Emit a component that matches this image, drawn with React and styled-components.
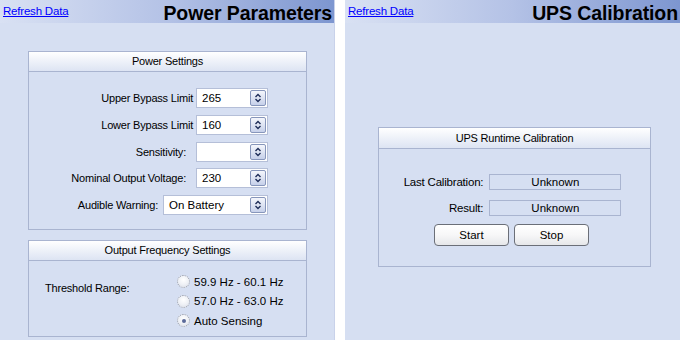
import * as React from "react"
import styled, { createGlobalStyle } from "styled-components"

const GlobalStyle = createGlobalStyle`
  body {
    margin: 0;
    background: #ffffff;
    font-family: "Liberation Sans", Arial, sans-serif;
    font-size: 11px;
    color: #000;
  }
`

const Page = styled.div`
  display: flex;
  gap: 10px;
  width: 680px;
  height: 340px;
  overflow: hidden;
`

const Panel = styled.div`
  width: 335px;
  height: 340px;
  background: #d6dff2;
  display: flex;
  flex-direction: column;
  border-right: ${p => (p.$edge ? "1px solid #c9d2ea" : "none")};
  box-sizing: border-box;
`

const Header = styled.div`
  height: 23px;
  flex-shrink: 0;
  display: flex;
  align-items: center;
  justify-content: space-between;
  padding: 0 2px 0 3px;
  background: linear-gradient(to right, #d9e1f3 0%, #b4c2e6 50%, #7d96d0 100%);
`

const RefreshLink = styled.a`
  color: #0000ff;
  text-decoration: underline;
  font-size: 11.5px;
  letter-spacing: -0.2px;
  align-self: flex-start;
  margin-top: 5px;
  cursor: pointer;
`

const Title = styled.h1`
  margin: 0;
  font-size: 19.5px;
  font-weight: bold;
  letter-spacing: -0.1px;
  line-height: 22px;
  padding-top: 2px;
`

const Body = styled.div`
  padding: ${p => p.$pad};
  display: flex;
  flex-direction: column;
  gap: 10px;
`

const GroupBox = styled.div`
  border: 1px solid #a9b4d0;
  display: flex;
  flex-direction: column;
`

const GroupHeader = styled.div`
  height: ${p => p.$h || 19}px;
  line-height: ${p => p.$h || 19}px;
  text-align: center;
  border-bottom: 1px solid #a9b4d0;
  background: linear-gradient(to bottom, #ffffff 0%, #f1f4fa 40%, #dde4f3 100%);
  letter-spacing: -0.2px;
`

const FormList = styled.div`
  padding: 16px 38px 14px 0;
  display: flex;
  flex-direction: column;
  gap: 6.75px;
`

const Row = styled.div`
  display: flex;
  justify-content: flex-end;
  align-items: center;
  gap: ${p => p.$gap}px;
  height: 20px;
`

const Label = styled.span`
  letter-spacing: -0.2px;
  white-space: nowrap;
`

const SpinBox = styled.div`
  width: ${p => p.$w}px;
  height: 20px;
  box-sizing: border-box;
  background: #ffffff;
  border: 1px solid #b5bfd8;
  display: flex;
  align-items: center;
  justify-content: space-between;
  padding: 0 1px 0 5px;
  font-size: 11.5px;
`

const SpinButton = styled.div`
  width: 16px;
  height: 16px;
  box-sizing: border-box;
  border: 1px solid #8796bb;
  border-radius: 2px;
  background: linear-gradient(to bottom, #f4f6fc 0%, #d9e0f1 60%, #c6d0ea 100%);
  display: flex;
  align-items: center;
  justify-content: center;
`

const FreqBody = styled.div`
  display: flex;
  padding: 11px 0 5px 16px;
`

const FreqLabel = styled.div`
  width: 132px;
  padding-top: 10px;
  letter-spacing: -0.2px;
`

const RadioList = styled.div`
  display: flex;
  flex-direction: column;
`

const RadioRow = styled.label`
  display: flex;
  align-items: center;
  gap: 4px;
  height: 19.5px;
  font-size: 11.5px;
`

const RadioDot = styled.span`
  width: 11px;
  height: 11px;
  border-radius: 50%;
  border: 1px dotted #8f95a4;
  background: radial-gradient(circle at 50% 35%, #ffffff 0%, #eef0f5 55%, #d6dae4 100%);
  display: flex;
  align-items: center;
  justify-content: center;
  &::after {
    content: "";
    width: 4px;
    height: 4px;
    border-radius: 50%;
    background: ${p => (p.$on ? "#5b6a9a" : "transparent")};
  }
`

const CalBody = styled.div`
  padding: 25px 0 20px 0;
  display: flex;
  flex-direction: column;
  align-items: center;
`

const CalGrid = styled.div`
  display: grid;
  grid-template-columns: auto 132px;
  column-gap: 6px;
  row-gap: 10px;
  align-items: center;
  margin-left: -4px;
`

const CalLabel = styled.span`
  text-align: right;
  letter-spacing: -0.2px;
  font-size: 11.5px;
`

const ValueBox = styled.div`
  height: 16px;
  box-sizing: border-box;
  border: 1px solid #a9b4d0;
  text-align: center;
  line-height: 14px;
  font-size: 11.5px;
`

const ButtonRow = styled.div`
  display: flex;
  gap: 5px;
  margin-top: 8px;
  margin-left: -6px;
`

const Button = styled.button`
  width: 75px;
  height: 22px;
  border: 1px solid #6b6f78;
  border-radius: 4px;
  background: linear-gradient(to bottom, #ffffff 0%, #f7f7f8 50%, #e6e7ea 100%);
  font-family: inherit;
  font-size: 11.5px;
  color: #000;
  padding: 0;
`

const Chevrons = () => (
  <svg width="8" height="10" viewBox="0 0 8 10">
    <path d="M1.5 4 L4 1.5 L6.5 4" fill="none" stroke="#1e2d58" strokeWidth="1.4" />
    <path d="M1.5 6 L4 8.5 L6.5 6" fill="none" stroke="#1e2d58" strokeWidth="1.4" />
  </svg>
)

const Spin = ({ width, value }) => (
  <SpinBox $w={width}>
    <span>{value}</span>
    <SpinButton>
      <Chevrons />
    </SpinButton>
  </SpinBox>
)

const settings = [
  { label: "Upper Bypass Limit", value: "265", gap: 3, width: 72 },
  { label: "Lower Bypass Limit", value: "160", gap: 3, width: 72 },
  { label: "Sensitivity:", value: "", gap: 10, width: 72 },
  { label: "Nominal Output Voltage:", value: "230", gap: 10, width: 72 },
  { label: "Audible Warning:", value: "On Battery", gap: 5, width: 105 },
]

const ranges = [
  { text: "59.9 Hz - 60.1 Hz", on: false },
  { text: "57.0 Hz - 63.0 Hz", on: false },
  { text: "Auto Sensing", on: true },
]

export default function App() {
  return (
    <Page>
      <GlobalStyle />
      <Panel $edge>
        <Header>
          <RefreshLink>Refresh Data</RefreshLink>
          <Title>Power Parameters</Title>
        </Header>
        <Body $pad="28px 27px 0 28px">
          <GroupBox>
            <GroupHeader>Power Settings</GroupHeader>
            <FormList>
              {settings.map(s => (
                <Row key={s.label} $gap={s.gap}>
                  <Label>{s.label}</Label>
                  <Spin width={s.width} value={s.value} />
                </Row>
              ))}
            </FormList>
          </GroupBox>
          <GroupBox>
            <GroupHeader>Output Frequency Settings</GroupHeader>
            <FreqBody>
              <FreqLabel>Threshold Range:</FreqLabel>
              <RadioList>
                {ranges.map(r => (
                  <RadioRow key={r.text}>
                    <RadioDot $on={r.on} />
                    {r.text}
                  </RadioRow>
                ))}
              </RadioList>
            </FreqBody>
          </GroupBox>
        </Body>
      </Panel>
      <Panel>
        <Header>
          <RefreshLink>Refresh Data</RefreshLink>
          <Title>UPS Calibration</Title>
        </Header>
        <Body $pad="104px 29px 0 33px">
          <GroupBox>
            <GroupHeader $h={20}>UPS Runtime Calibration</GroupHeader>
            <CalBody>
              <CalGrid>
                <CalLabel>Last Calibration:</CalLabel>
                <ValueBox>Unknown</ValueBox>
                <CalLabel>Result:</CalLabel>
                <ValueBox>Unknown</ValueBox>
              </CalGrid>
              <ButtonRow>
                <Button>Start</Button>
                <Button>Stop</Button>
              </ButtonRow>
            </CalBody>
          </GroupBox>
        </Body>
      </Panel>
    </Page>
  )
}
